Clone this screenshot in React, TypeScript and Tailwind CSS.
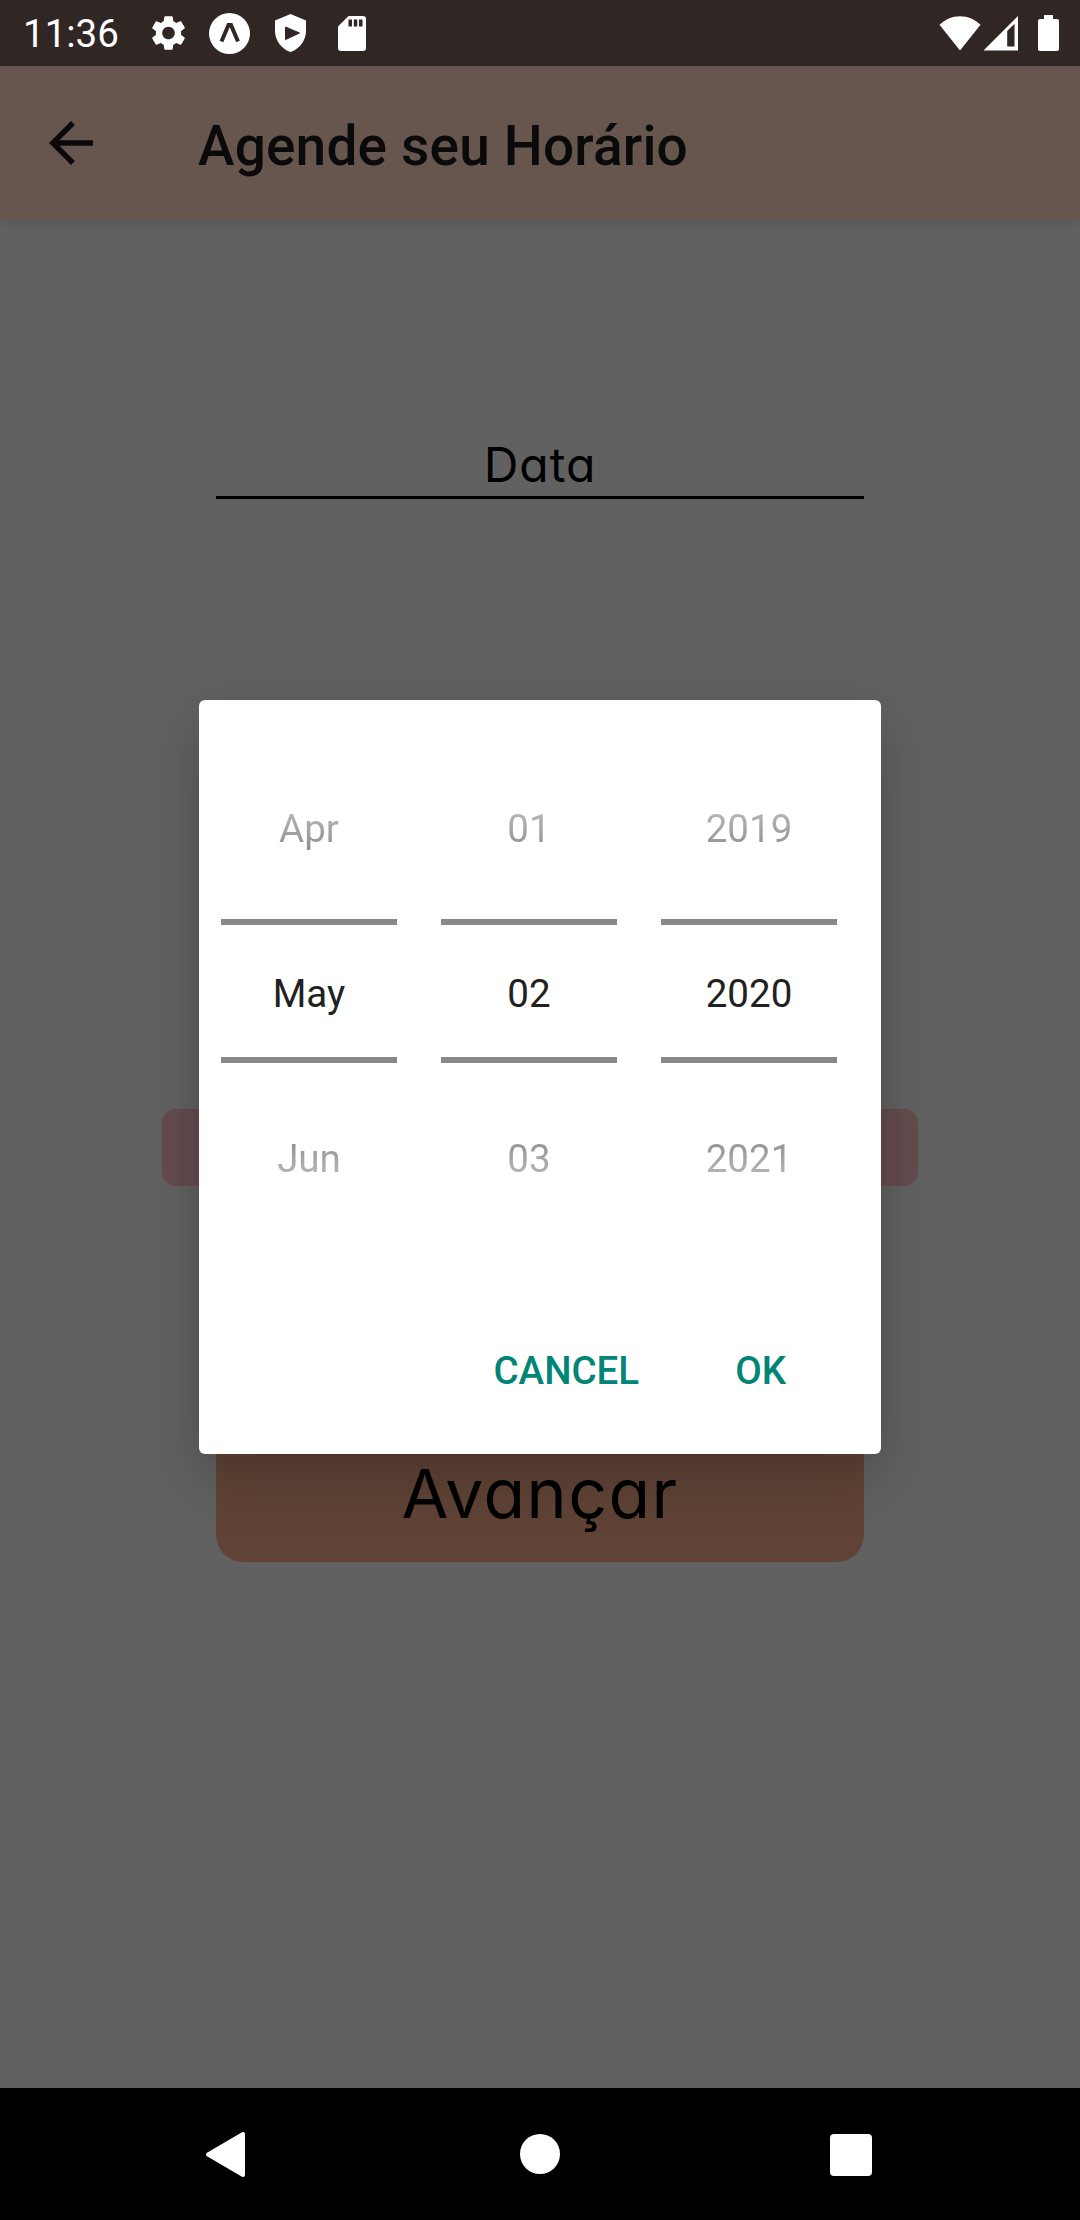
import React from "react";

function StatusBar() {
  return (
    <div className="flex h-[66px] shrink-0 items-center bg-[#302725] pl-[23px] text-white">
      <span className="w-[128px] pt-[1px] text-[38.5px] leading-[46px]">11:36</span>
      <svg className="h-[42px] w-[36px]" viewBox="2 0 20.57 24" fill="currentColor">
        <path d="M19.14 12.94c.04-.3.06-.61.06-.94 0-.32-.02-.64-.07-.94l2.03-1.58c.18-.14.23-.41.12-.61l-1.92-3.32c-.12-.22-.37-.29-.59-.22l-2.39.96c-.5-.38-1.03-.7-1.62-.94l-.36-2.54c-.04-.24-.24-.41-.48-.41h-3.84c-.24 0-.43.17-.47.41l-.36 2.54c-.59.24-1.13.57-1.62.94l-2.39-.96c-.22-.08-.47 0-.59.22L2.74 8.87c-.12.21-.08.47.12.61l2.03 1.58c-.05.3-.09.63-.09.94s.02.64.07.94l-2.03 1.58c-.18.14-.23.41-.12.61l1.92 3.32c.12.22.37.29.59.22l2.39-.96c.5.38 1.03.7 1.62.94l.36 2.54c.05.24.24.41.48.41h3.84c.24 0 .44-.17.47-.41l.36-2.54c.59-.24 1.13-.56 1.62-.94l2.39.96c.22.08.47 0 .59-.22l1.92-3.32c.12-.22.07-.47-.12-.61l-2.01-1.58zM12 15.6c-1.98 0-3.6-1.62-3.6-3.6s1.62-3.6 3.6-3.6 3.6 1.62 3.6 3.6-1.62 3.6-3.6 3.6z" />
      </svg>
      <svg className="ml-[22px] h-[41px] w-[41px]" viewBox="0 0 41 41">
        <circle cx="20.5" cy="20.5" r="20.5" fill="currentColor" />
        <path d="M12.5 28.5 19.5 12h2.5l7 16.5" fill="none" stroke="#302725" strokeWidth="4" />
      </svg>
      <svg className="ml-[25px] h-[38px] w-[31px]" viewBox="0 0 31 38">
        <path d="M15.5 0 31 6.5V17c0 9.500-6.500 18-15.500 21C6.500 35 0 26.500 0 17V6.500z" fill="currentColor" />
        <path d="M10.500 13v12.600L24.500 19z" fill="#302725" stroke="#302725" strokeWidth="1" strokeLinejoin="round" />
      </svg>
      <svg className="ml-[31.5px] h-[35px] w-[28px]" viewBox="0 0 28 35">
        <path d="M10.500 0H25a3 3 0 0 1 3 3v29a3 3 0 0 1-3 3H3a3 3 0 0 1-3-3V10.500z" fill="currentColor" />
        <path d="M10.500 3.500h3.500v7h-3.500zM15.800 3.500h3.500v7h-3.500zM21 3.500h3.500v7H21z" fill="#302725" />
      </svg>
      <svg className="ml-auto h-[36px] w-[42px]" viewBox="0 0 42 36" fill="currentColor">
        <path d="M.5 9.800C6 4.500 13 1.200 21 1.200s15 3.300 20.500 8.600L21 35.500z" />
      </svg>
      <svg className="ml-[2px] h-[36px] w-[36px]" viewBox="0 0 36 36">
        <path d="M.5 35.500 35 1v34.500z" fill="currentColor" />
        <path d="M24.200 31.500V16l7.300-7.300v22.800z" fill="#302725" />
      </svg>
      <svg className="ml-[19px] mr-[21.5px] h-[36px] w-[21px]" viewBox="0 0 21 36" fill="currentColor">
        <path d="M6 0h9v4h4a2 2 0 0 1 2 2v28a2 2 0 0 1-2 2H2a2 2 0 0 1-2-2V6a2 2 0 0 1 2-2h4z" />
      </svg>
    </div>
  );
}

function Header() {
  return (
    <header className="relative flex h-[154px] shrink-0 items-center bg-[#66564e] pl-[38px] text-[#0a0a0a] shadow-[0_2px_10px_rgba(0,0,0,0.12)]">
      <svg className="mb-[1px] h-[66px] w-[66px]" viewBox="0 0 24 24" fill="currentColor">
        <path d="M20 11H7.830l5.590-5.590L12 4l-8 8 8 8 1.410-1.410L7.830 13H20z" />
      </svg>
      <h1 className="ml-[94px] pt-[6px] text-[55px] font-medium leading-[64px] tracking-[0.17px]">Agende seu Horário</h1>
    </header>
  );
}

function Wheel({ values }: { values: [string, string, string] }) {
  return (
    <div className="w-[176px] text-center text-[38.5px] leading-[46px]">
      <div className="h-[219px] pt-[106px]">
        <span className="block bg-linear-to-b from-[#bcbcbc] to-[#8e8e8e] bg-clip-text text-transparent">{values[0]}</span>
      </div>
      <div className="h-[6px] bg-[#888888]" />
      <div className="h-[132px] pt-[46px] text-[#212121]">{values[1]}</div>
      <div className="h-[6px] bg-[#888888]" />
      <div className="pt-[73px]">
        <span className="block bg-linear-to-b from-[#8e8e8e] to-[#bcbcbc] bg-clip-text text-transparent">{values[2]}</span>
      </div>
    </div>
  );
}

function DateDialog() {
  return (
    <div className="absolute inset-x-0 top-[700px] flex justify-center">
      <div
        role="dialog"
        className="flex h-[754px] w-[682px] flex-col rounded-[6px] bg-white shadow-[0_28px_56px_rgba(0,0,0,0.19),0_0_30px_rgba(0,0,0,0.04)]"
      >
        <div className="flex gap-[44px] pl-[22px]">
          <Wheel values={["Apr", "May", "Jun"]} />
          <Wheel values={["01", "02", "03"]} />
          <Wheel values={["2019", "2020", "2021"]} />
        </div>
        <div className="mb-[60px] mr-[95px] mt-auto flex justify-end gap-[96px] text-[38.5px] font-medium leading-[46px] text-[#008577]">
          <button>CANCEL</button>
          <button>OK</button>
        </div>
      </div>
    </div>
  );
}

function NavBar() {
  return (
    <nav className="flex h-[132px] shrink-0 items-center bg-black pl-[205px] text-white">
      <svg className="h-[48px] w-[41px]" viewBox="0 0 41 48">
        <path d="M38 3.500v41L3 24z" transform="translate(0 .5)" fill="currentColor" stroke="currentColor" strokeWidth="4" strokeLinejoin="round" />
      </svg>
      <div className="ml-[274px] size-[40px] rounded-full bg-white" />
      <div className="ml-[270px] mt-[1px] size-[42px] rounded-[4px] bg-white" />
    </nav>
  );
}

export default function App() {
  return (
    <div className="relative flex h-[2220px] w-[1080px] flex-col overflow-hidden bg-[#616161] font-[Roboto,sans-serif]">
      <StatusBar />
      <Header />
      <main className="flex flex-1 flex-col items-center font-[Inter,sans-serif] text-black">
        <div className="mt-[216px] h-[63px] w-[648px] border-b-[3px] border-black text-center text-[48px] leading-[58px] tracking-[1px] [font-feature-settings:'cv11']">
          Data
        </div>
        <div className="mt-[610px] h-[77px] w-[756px] rounded-[14px] bg-[#644b4e]" />
        <button className="mt-[244px] h-[132px] w-[648px] rounded-[27px] bg-[#604336] pb-[6px] text-[68px] leading-[80px] tracking-[1.4px] [font-feature-settings:'cv11']">
          Avançar
        </button>
      </main>
      <NavBar />
      <DateDialog />
    </div>
  );
}
